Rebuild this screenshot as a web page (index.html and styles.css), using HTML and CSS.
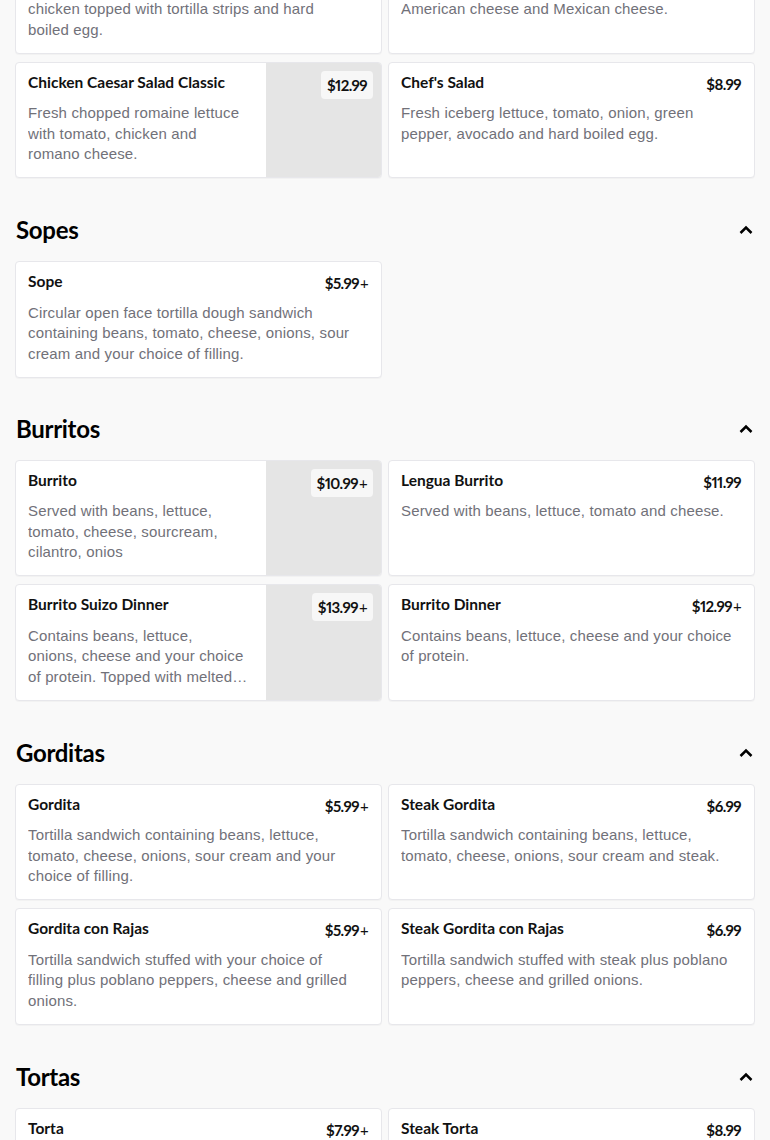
FILE: index.html
```html
<!DOCTYPE html>
<html lang="en">
<head>
<meta charset="utf-8">
<title>Menu</title>
<link rel="stylesheet" href="styles.css">
</head>
<body>
<main class="menu">

  <section class="section section--cut">
    <div class="grid">
      <article class="card">
        <div class="card-body">
          <div class="card-head"><h3 class="card-title">Taco Salad</h3><span class="price">$10.99</span></div>
          <p class="card-desc">Romaine lettuce, tomato, avocado and grilled chicken topped with tortilla strips and hard<br>boiled egg.</p>
        </div>
      </article>
      <article class="card">
        <div class="card-body">
          <div class="card-head"><h3 class="card-title">Cobb Salad</h3><span class="price">$9.99</span></div>
          <p class="card-desc">Fresh iceberg lettuce, tomato, ham, turkey, American cheese and Mexican cheese.</p>
        </div>
      </article>
      <article class="card card--img">
        <div class="card-body">
          <div class="card-head"><h3 class="card-title">Chicken Caesar Salad Classic</h3></div>
          <p class="card-desc">Fresh chopped romaine lettuce with tomato, chicken and romano cheese.</p>
        </div>
        <div class="thumb"><span class="badge"><span class="price">$12.99</span></span></div>
      </article>
      <article class="card">
        <div class="card-body">
          <div class="card-head"><h3 class="card-title">Chef's Salad</h3><span class="price">$8.99</span></div>
          <p class="card-desc">Fresh iceberg lettuce, tomato, onion, green pepper, avocado and hard boiled egg.</p>
        </div>
      </article>
    </div>
  </section>

  <section class="section">
    <div class="section-head">
      <h2 class="section-title">Sopes</h2>
      <svg class="chevron" width="16" height="16" viewBox="0 0 16 16" aria-hidden="true"><polyline points="2.5,11 8,5.5 13.5,11" fill="none" stroke="#000" stroke-width="2.5"/></svg>
    </div>
    <div class="grid">
      <article class="card">
        <div class="card-body">
          <div class="card-head"><h3 class="card-title">Sope</h3><span class="price">$5.99<span class="plus">+</span></span></div>
          <p class="card-desc">Circular open face tortilla dough sandwich containing beans, tomato, cheese, onions, sour cream and your choice of filling.</p>
        </div>
      </article>
    </div>
  </section>

  <section class="section section--tight">
    <div class="section-head">
      <h2 class="section-title">Burritos</h2>
      <svg class="chevron" width="16" height="16" viewBox="0 0 16 16" aria-hidden="true"><polyline points="2.5,11 8,5.5 13.5,11" fill="none" stroke="#000" stroke-width="2.5"/></svg>
    </div>
    <div class="grid">
      <article class="card card--img">
        <div class="card-body">
          <div class="card-head"><h3 class="card-title">Burrito</h3></div>
          <p class="card-desc">Served with beans, lettuce, tomato, cheese, sourcream, cilantro, onios</p>
        </div>
        <div class="thumb"><span class="badge"><span class="price">$10.99<span class="plus">+</span></span></span></div>
      </article>
      <article class="card">
        <div class="card-body">
          <div class="card-head"><h3 class="card-title">Lengua Burrito</h3><span class="price">$11.99</span></div>
          <p class="card-desc">Served with beans, lettuce, tomato and cheese.</p>
        </div>
      </article>
      <article class="card card--img">
        <div class="card-body">
          <div class="card-head"><h3 class="card-title">Burrito Suizo Dinner</h3></div>
          <p class="card-desc">Contains beans, lettuce,<br>onions, cheese and your choice of protein. Topped with melted cheese and green sauce.</p>
        </div>
        <div class="thumb"><span class="badge"><span class="price">$13.99<span class="plus">+</span></span></span></div>
      </article>
      <article class="card">
        <div class="card-body">
          <div class="card-head"><h3 class="card-title">Burrito Dinner</h3><span class="price">$12.99<span class="plus">+</span></span></div>
          <p class="card-desc">Contains beans, lettuce, cheese and your choice of protein.</p>
        </div>
      </article>
    </div>
  </section>

  <section class="section">
    <div class="section-head">
      <h2 class="section-title">Gorditas</h2>
      <svg class="chevron" width="16" height="16" viewBox="0 0 16 16" aria-hidden="true"><polyline points="2.5,11 8,5.5 13.5,11" fill="none" stroke="#000" stroke-width="2.5"/></svg>
    </div>
    <div class="grid">
      <article class="card">
        <div class="card-body">
          <div class="card-head"><h3 class="card-title">Gordita</h3><span class="price">$5.99<span class="plus">+</span></span></div>
          <p class="card-desc">Tortilla sandwich containing beans, lettuce, tomato, cheese, onions, sour cream and your choice of filling.</p>
        </div>
      </article>
      <article class="card">
        <div class="card-body">
          <div class="card-head"><h3 class="card-title">Steak Gordita</h3><span class="price">$6.99</span></div>
          <p class="card-desc">Tortilla sandwich containing beans, lettuce, tomato, cheese, onions, sour cream and steak.</p>
        </div>
      </article>
      <article class="card">
        <div class="card-body">
          <div class="card-head"><h3 class="card-title">Gordita con Rajas</h3><span class="price">$5.99<span class="plus">+</span></span></div>
          <p class="card-desc">Tortilla sandwich stuffed with your choice of filling plus poblano peppers, cheese and grilled onions.</p>
        </div>
      </article>
      <article class="card">
        <div class="card-body">
          <div class="card-head"><h3 class="card-title">Steak Gordita con Rajas</h3><span class="price">$6.99</span></div>
          <p class="card-desc">Tortilla sandwich stuffed with steak plus poblano peppers, cheese and grilled onions.</p>
        </div>
      </article>
    </div>
  </section>

  <section class="section">
    <div class="section-head">
      <h2 class="section-title">Tortas</h2>
      <svg class="chevron" width="16" height="16" viewBox="0 0 16 16" aria-hidden="true"><polyline points="2.5,11 8,5.5 13.5,11" fill="none" stroke="#000" stroke-width="2.5"/></svg>
    </div>
    <div class="grid">
      <article class="card">
        <div class="card-body">
          <div class="card-head"><h3 class="card-title">Torta</h3><span class="price">$7.99<span class="plus">+</span></span></div>
          <p class="card-desc">Mexican sandwich with beans, lettuce, tomato, onions, avocado, sour cream and your choice of filling.</p>
        </div>
      </article>
      <article class="card">
        <div class="card-body">
          <div class="card-head"><h3 class="card-title">Steak Torta</h3><span class="price">$8.99</span></div>
          <p class="card-desc">Mexican sandwich with beans, lettuce, tomato, onions, avocado, sour cream and steak.</p>
        </div>
      </article>
    </div>
  </section>

</main>
</body>
</html>
```

FILE: styles.css
```css
html, body {
  margin: 0;
  padding: 0;
}

body {
  background: #f9f9f9;
  font-family: "Liberation Sans", Arial, sans-serif;
  color: #111;
}

.menu {
  padding: 0 15px;
}

.section {
  padding-top: 38px;
}

.section--tight {
  padding-top: 37px;
}

.section--cut {
  margin-top: -63px;
  padding-top: 0;
}

.section-head {
  display: flex;
  align-items: center;
  justify-content: space-between;
  height: 28px;
  margin-bottom: 17px;
}

.section-title {
  margin: 0;
  padding-left: 1px;
  font: 700 24px/28px "Lato", sans-serif;
  letter-spacing: -0.3px;
  color: #000;
}

.chevron {
  display: block;
  margin-right: 1px;
}

.grid {
  display: grid;
  grid-template-columns: 1fr 1fr;
  gap: 8px 6px;
}

.card {
  display: flex;
  height: 116.5px;
  box-sizing: border-box;
  background: #fff;
  border: 1px solid #e7e7eb;
  border-radius: 4px;
  overflow: hidden;
  box-shadow: 0 1px 1px rgba(0, 0, 0, 0.03);
}

.card-body {
  flex: 1;
  min-width: 0;
  padding: 9px 13px 0 12px;
}

.card--img .card-body {
  padding-right: 8px;
}

.card-head {
  display: flex;
  justify-content: space-between;
  align-items: flex-start;
  gap: 8px;
}

.card-title {
  margin: 0;
  font: 700 15.5px/20px "Lato", sans-serif;
  color: #111;
}

.price {
  margin: 2px 0 -2px;
  font: 700 15px/20px "Lato", sans-serif;
  font-variant-numeric: proportional-nums;
  letter-spacing: -0.6px;
  color: #111;
  white-space: nowrap;
}

.price .plus {
  font-weight: 400;
  margin-left: 1px;
}

.card-desc {
  margin: 11.5px 0 0;
  padding-right: 8.5px;
  font: 15px/20.5px "Liberation Sans", Arial, sans-serif;
  letter-spacing: 0.15px;
  color: #717179;
  display: -webkit-box;
  -webkit-line-clamp: 3;
  -webkit-box-orient: vertical;
  overflow: hidden;
}

.card--img .card-desc {
  padding-right: 6px;
}

.thumb {
  flex: none;
  width: 115px;
  box-sizing: border-box;
  padding: 8px;
  background: #e5e5e5;
  display: flex;
  justify-content: flex-end;
  align-items: flex-start;
}

.badge {
  display: block;
  padding: 4px 6px;
  background: #f7f7f7;
  border-radius: 4px;
}

.badge .price {
  display: block;
  margin: 0;
}
```
